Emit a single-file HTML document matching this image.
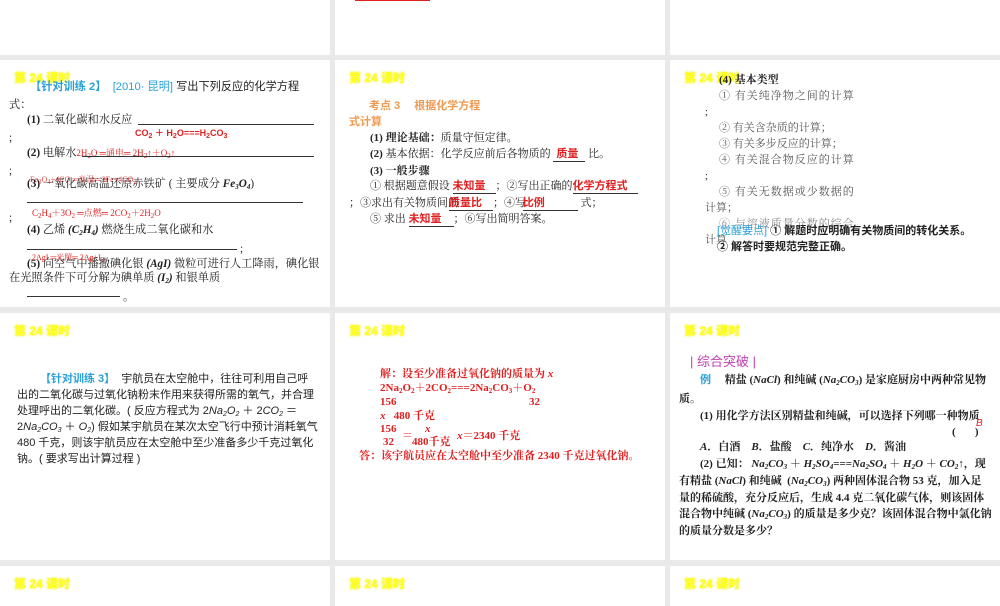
<!DOCTYPE html>
<html><head><meta charset="utf-8">
<style>
*{margin:0;padding:0;box-sizing:border-box}
body{width:1000px;height:600px;background:#e9e9e9;position:relative;overflow:hidden;font-family:"Liberation Serif","Noto Serif CJK SC","Noto Sans CJK SC",serif;color:#222}
.s{position:absolute;background:#fff;overflow:hidden}
.t{position:absolute;white-space:nowrap;font-size:11px;line-height:13px}
.ttl{position:absolute;font-family:"Liberation Sans","Noto Sans CJK SC",sans-serif;font-size:12px;font-weight:bold;color:#ffff20;text-shadow:0 0 2px #ee0;white-space:nowrap}
.r{color:#e02020}
.b{font-weight:bold}
.bl{color:#2aa0d8}
.u{position:absolute;border-bottom:1px solid #333;height:1px}
.sans{font-family:"Liberation Sans","Noto Sans CJK SC",sans-serif}
sub{font-size:7px;vertical-align:-2px}
.c1 .t{font-size:11.2px}
</style></head><body>
<!-- row 1 -->
<div class="s" style="left:0;top:0;width:330px;height:55px"></div>
<div class="s" style="left:335px;top:0;width:330px;height:55px"><div class="u" style="left:20px;top:0;width:75px;border-color:#e02020"></div></div>
<div class="s" style="left:670px;top:0;width:330px;height:55px"></div>

<!-- row 2 col1 -->
<div class="s c1" style="left:0;top:60px;width:330px;height:247px">
<div class="ttl" style="left:14px;top:9px">第 24 课时</div>
<div class="t sans" style="left:30px;top:21px"><span class="bl b">【针对训练 2】</span>&nbsp; <span class="bl">[2010· 昆明]</span> 写出下列反应的化学方程</div>
<div class="t" style="left:9px;top:39px">式：</div>
<div class="t" style="left:27px;top:54px"><b>(1)</b> 二氧化碳和水反应</div><div class="u" style="left:138px;top:64px;width:176px"></div>
<div class="t" style="left:9px;top:72px">;</div>
<div class="t r sans b" style="left:135px;top:67px;font-size:9px">CO<sub>2</sub> ＋ H<sub>2</sub>O===H<sub>2</sub>CO<sub>3</sub></div>
<div class="t" style="left:27px;top:87px"><b>(2)</b> 电解水<span class="r" style="font-size:9px">2H<sub>2</sub>O ═通电═ 2H<sub>2</sub>↑＋O<sub>2</sub>↑</span></div><div class="u" style="left:82px;top:96px;width:232px"></div>
<div class="t" style="left:9px;top:105px">;</div>
<div class="t" style="left:27px;top:118px"><b>(3)</b> 一氧化碳高温还原赤铁矿 ( 主要成分 <b><i>Fe<sub>3</sub>O<sub>4</sub></i></b>)</div>
<div class="t r" style="left:30px;top:113px;font-size:8px;opacity:.8">Fe<sub>3</sub>O<sub>4</sub>+4CO ═高温═ 3Fe+4CO<sub>2</sub></div>
<div class="u" style="left:27px;top:142px;width:276px"></div>
<div class="t" style="left:9px;top:152px">;</div>
<div class="t r" style="left:32px;top:147px;font-size:9px">C<sub>2</sub>H<sub>4</sub>＋3O<sub>2</sub> ═点燃═ 2CO<sub>2</sub>＋2H<sub>2</sub>O</div>
<div class="t" style="left:27px;top:164px"><b>(4)</b> 乙烯 <b><i>(C<sub>2</sub>H<sub>4</sub>)</i></b> 燃烧生成二氧化碳和水</div>
<div class="u" style="left:27px;top:189px;width:210px"></div><div class="t" style="left:240px;top:183px">;</div>
<div class="t" style="left:27px;top:198px"><b>(5)</b> 向空气中播撒碘化银 <b><i>(AgI)</i></b> 微粒可进行人工降雨，碘化银</div>
<div class="t r" style="left:32px;top:191px;font-size:8px">2AgI ═光照═ 2Ag+I<sub>2</sub></div>
<div class="t" style="left:9px;top:212px">在光照条件下可分解为碘单质 <b><i>(I<sub>2</sub>)</i></b> 和银单质</div>
<div class="u" style="left:27px;top:236px;width:93px"></div><div class="t" style="left:123px;top:231px">。</div>
</div>

<!-- row 2 col2 -->
<div class="s" style="left:335px;top:60px;width:330px;height:247px">
<div class="ttl" style="left:14px;top:9px">第 24 课时</div>
<div class="t sans b" style="left:34px;top:40px;color:#ee9a50">考点 3　 根据化学方程</div>
<div class="t sans b" style="left:14px;top:56px;color:#ee9a50">式计算</div>
<div class="t" style="left:35px;top:72px"><b>(1) 理论基础：</b>质量守恒定律。</div>
<div class="t" style="left:35px;top:88px"><b>(2)</b> 基本依据：化学反应前后各物质的 <span style="display:inline-block;width:32px;border-bottom:1px solid #333" class="r b sans">&nbsp;质量</span> 比。</div>
<div class="t b" style="left:35px;top:105px">(3) 一般步骤</div>
<div class="t" style="left:35px;top:120px">① 根据题意假设 <span style="display:inline-block;width:43px;border-bottom:1px solid #333" class="r b sans">未知量</span>；②写出正确的<span style="display:inline-block;width:65px;border-bottom:1px solid #333" class="r b sans">化学方程式</span></div>
<div class="t" style="left:14px;top:137px">；③求出有关物质间的<span style="display:inline-block;width:44px;border-bottom:1px solid #333;margin-left:-10px" class="r b sans">质量比</span>；④写 <span style="display:inline-block;width:55px;border-bottom:1px solid #333;margin-left:-6px" class="r b sans">比例</span> 式；</div>
<div class="t" style="left:35px;top:153px">⑤ 求出 <span style="display:inline-block;width:45px;border-bottom:1px solid #333" class="r b sans">未知量</span>；⑥写出简明答案。</div>
</div>

<!-- row 2 col3 -->
<div class="s" style="left:670px;top:60px;width:330px;height:247px">
<div class="ttl" style="left:14px;top:9px">第 24 课时</div>
<div class="t b" style="left:49px;top:14px">(4) 基本类型</div>
<div class="t" style="left:49px;top:30px;color:#555;letter-spacing:1px">① 有关纯净物之间的计算</div>
<div class="t" style="left:35px;top:46px">;</div>
<div class="t" style="left:49px;top:62px;color:#555">② 有关含杂质的计算；</div>
<div class="t" style="left:49px;top:78px;color:#555">③ 有关多步反应的计算；</div>
<div class="t" style="left:49px;top:94px;color:#555;letter-spacing:1px">④ 有关混合物反应的计算</div>
<div class="t" style="left:35px;top:110px">;</div>
<div class="t" style="left:49px;top:126px;color:#555;letter-spacing:1px">⑤ 有关无数据或少数据的</div>
<div class="t" style="left:35px;top:142px;color:#555">计算；</div>
<div class="t" style="left:49px;top:158px;color:#888;letter-spacing:1px">⑥ 与溶液质量分数的综合</div>
<div class="t" style="left:35px;top:174px;color:#555">计算</div>
<div class="t b sans" style="left:47px;top:165px"><span class="bl" style="font-weight:normal">[觉醒要点]</span> ① 解题时应明确有关物质间的转化关系。</div>
<div class="t b sans" style="left:47px;top:181px">② 解答时要规范完整正确。</div>
</div>

<!-- row 3 col1 -->
<div class="s" style="left:0;top:313px;width:330px;height:247px">
<div class="ttl" style="left:14px;top:9px">第 24 课时</div>
<div class="t sans" style="left:40px;top:60px"><span class="bl b">【针对训练 3】</span>&nbsp; 宇航员在太空舱中，往往可利用自己呼</div>
<div class="t sans" style="left:17px;top:76px">出的二氧化碳与过氧化钠粉末作用来获得所需的氧气，并合理</div>
<div class="t sans" style="left:17px;top:92px">处理呼出的二氧化碳。( 反应方程式为 2<i>Na<sub>2</sub>O<sub>2</sub></i> ＋ 2<i>CO<sub>2</sub></i> ＝</div>
<div class="t sans" style="left:17px;top:108px">2<i>Na<sub>2</sub>CO<sub>3</sub></i> ＋ <i>O<sub>2</sub></i>) 假如某宇航员在某次太空飞行中预计消耗氧气</div>
<div class="t sans" style="left:17px;top:124px">480 千克，则该宇航员应在太空舱中至少准备多少千克过氧化</div>
<div class="t sans" style="left:17px;top:140px">钠。( 要求写出计算过程 )</div>
</div>

<!-- row 3 col2 -->
<div class="s" style="left:335px;top:313px;width:330px;height:247px">
<div class="ttl" style="left:14px;top:9px">第 24 课时</div>
<div class="t r b" style="left:45px;top:55px">解：设至少准备过氧化钠的质量为 <i>x</i></div>
<div class="t r b" style="left:45px;top:69px">2Na<sub>2</sub>O<sub>2</sub>＋2CO<sub>2</sub>===2Na<sub>2</sub>CO<sub>3</sub>＋O<sub>2</sub></div>
<div class="t r b" style="left:45px;top:83px">156</div><div class="t r b" style="left:194px;top:83px">32</div>
<div class="t r b" style="left:45px;top:97px"><i>x</i> &nbsp;&nbsp;480 千克</div>
<div class="t r b" style="left:45px;top:110px">156</div><div class="t r b" style="left:48px;top:123px">32</div>
<div class="t r b" style="left:67px;top:117px">＝</div>
<div class="t r b" style="left:90px;top:110px"><i>x</i></div><div class="t r b" style="left:77px;top:123px">480千克</div>
<div class="t r b" style="left:122px;top:117px"><i>x</i>＝2340 千克</div>
<div class="t r b" style="left:24px;top:137px">答：该宇航员应在太空舱中至少准备 2340 千克过氧化钠。</div>
</div>

<!-- row 3 col3 -->
<div class="s" style="left:670px;top:313px;width:330px;height:247px">
<div class="ttl" style="left:14px;top:9px">第 24 课时</div>
<div class="t sans" style="left:20px;top:42px;font-size:13px;color:#c040b0">| 综合突破 |</div>
<div class="t b" style="left:30px;top:61px"><span class="bl sans">例</span>&nbsp;&nbsp;&nbsp;&nbsp; 精盐 (<i>NaCl</i>) 和纯碱 (<i>Na<sub>2</sub>CO<sub>3</sub></i>) 是家庭厨房中两种常见物</div>
<div class="t b" style="left:9px;top:80px">质。</div>
<div class="t b" style="left:30px;top:97px">(1) 用化学方法区别精盐和纯碱，可以选择下列哪一种物质</div>
<div class="t r sans" style="left:306px;top:104px;font-size:10px"><i>B</i></div>
<div class="t b" style="left:282px;top:113px">(&nbsp;&nbsp;&nbsp;&nbsp;&nbsp;&nbsp;&nbsp;)</div>
<div class="t b" style="left:30px;top:128px"><i>A</i>．白酒　<i>B</i>．盐酸　<i>C</i>．纯净水　<i>D</i>．酱油</div>
<div class="t b" style="left:30px;top:145px">(2) 已知： <i>Na<sub>2</sub>CO<sub>3</sub></i> ＋ <i>H<sub>2</sub>SO<sub>4</sub></i>===<i>Na<sub>2</sub>SO<sub>4</sub></i> ＋ <i>H<sub>2</sub>O</i> ＋ <i>CO<sub>2</sub></i>↑，现</div>
<div class="t b" style="left:9px;top:162px">有精盐 (<i>NaCl</i>) 和纯碱 &nbsp;(<i>Na<sub>2</sub>CO<sub>3</sub></i>) 两种固体混合物 53 克，加入足</div>
<div class="t b" style="left:9px;top:179px">量的稀硫酸，充分反应后，生成 4.4 克二氧化碳气体，则该固体</div>
<div class="t b" style="left:9px;top:195px">混合物中纯碱 (<i>Na<sub>2</sub>CO<sub>3</sub></i>) 的质量是多少克？该固体混合物中氯化钠</div>
<div class="t b" style="left:9px;top:212px">的质量分数是多少？</div>
</div>

<!-- row 4 -->
<div class="s" style="left:0;top:566px;width:330px;height:40px"><div class="ttl" style="left:14px;top:9px">第 24 课时</div></div>
<div class="s" style="left:335px;top:566px;width:330px;height:40px"><div class="ttl" style="left:14px;top:9px">第 24 课时</div></div>
<div class="s" style="left:670px;top:566px;width:330px;height:40px"><div class="ttl" style="left:14px;top:9px">第 24 课时</div></div>
</body></html>
